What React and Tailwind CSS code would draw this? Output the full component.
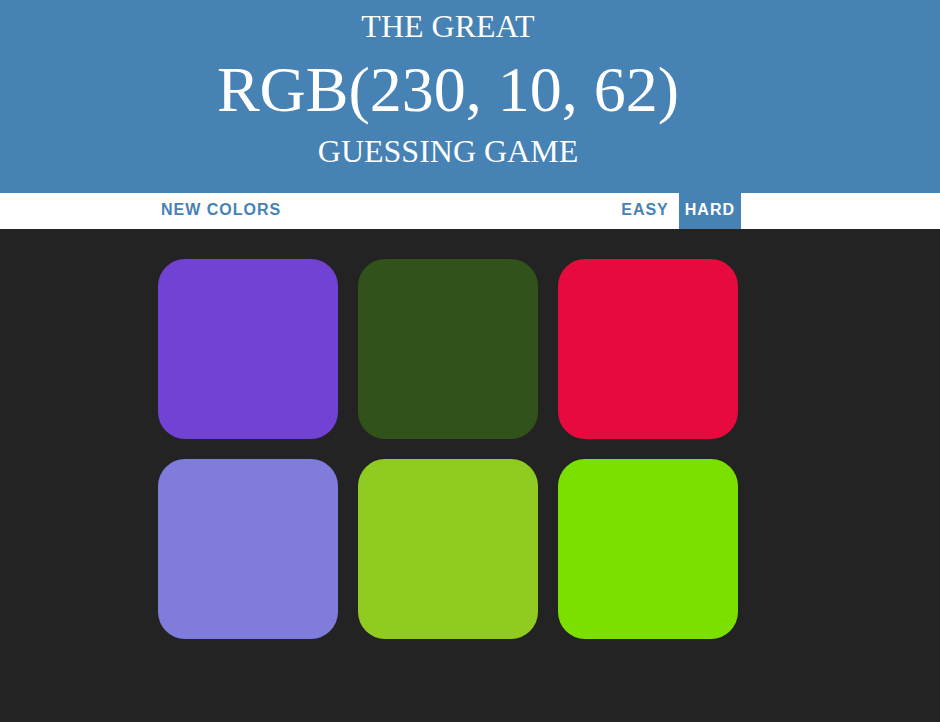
const target = 'RGB(230, 10, 62)'

const squares = [
  '#7142d3',
  '#32521b',
  '#e60a3e',
  '#7f7cdc',
  '#8fcb21',
  '#7be000',
]

function Square({ color }) {
  return (
    <div className="m-[10px] h-[180px] w-[180px] rounded-[15%]" style={{ backgroundColor: color }} />
  )
}

export default function App() {
  const mode = 'hard'

  return (
    <div className="min-h-[722px] bg-[#232323] font-['Liberation_Sans',Arial,sans-serif]">
      {/* title */}
      <div className="bg-[#4682b4] pt-[9px] pb-[24px] text-white">
        <div className="w-[896px] text-center font-['Liberation_Serif','Times_New_Roman',serif] font-normal uppercase">
          <div className="text-[32px] leading-[35px]">The Great</div>
          <div className="mt-[11px] text-[64px] leading-[70px]">{target}</div>
          <div className="mt-[9px] text-[32px] leading-[35px]">Guessing Game</div>
        </div>
      </div>

      {/* controls */}
      <div className="h-[36px] bg-white">
        <div className="w-[896px]">
          <div className="mx-auto flex h-[36px] w-[586px] items-start justify-between">
            <button className="h-[36px] px-[6px] pb-[2px] text-[16px] font-bold uppercase leading-[34px] tracking-[1px] text-[#4682b4]">
              New Colors
            </button>
            <div className="flex gap-[4px]">
              <button className={`h-[36px] px-[6px] pb-[2px] text-[16px] font-bold uppercase leading-[34px] tracking-[1px] ${mode === 'easy' ? 'bg-[#4682b4] text-white' : 'text-[#4682b4]'}`}>
                Easy
              </button>
              <button className={`h-[36px] px-[6px] pb-[2px] text-[16px] font-bold uppercase leading-[34px] tracking-[1px] ${mode === 'hard' ? 'bg-[#4682b4] text-white' : 'text-[#4682b4]'}`}>
                Hard
              </button>
            </div>
          </div>
        </div>
      </div>

      {/* swatches */}
      <div className="w-[896px] pt-[20px]">
        <div className="mx-auto flex w-[600px] flex-wrap">
          {squares.map((c, i) => (
            <Square key={i} color={c} />
          ))}
        </div>
      </div>
    </div>
  )
}
